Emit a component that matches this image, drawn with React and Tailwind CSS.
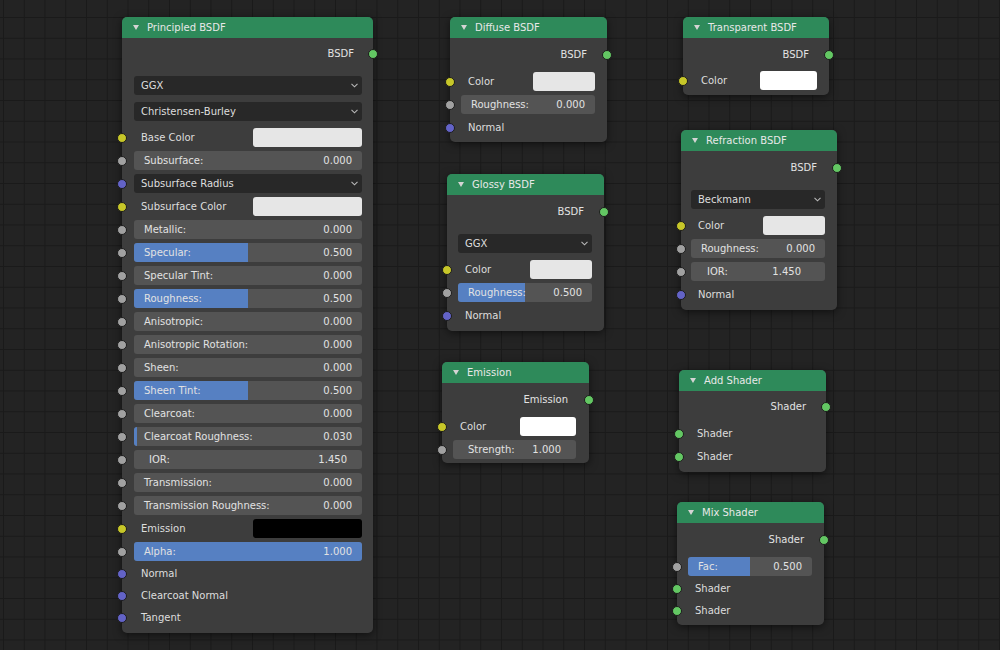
import React from "react";

// socket colours, Blender default theme
const SOCK = {
  yellow: "bg-[#c7c729]",
  gray: "bg-[#a1a1a1]",
  purple: "bg-[#6363c7]",
  green: "bg-[#63c763]",
};

function Socket({ color, side = "left" }) {
  return (
    <span
      className={`absolute top-1/2 -translate-y-1/2 w-[10px] h-[10px] rounded-full border border-[#1c1c1c] ${SOCK[color]} ${
        side === "left" ? "left-[-5px]" : "right-[-5px]"
      }`}
    />
  );
}

function Node({ title, className, children }) {
  return (
    <div
      className={`absolute flex flex-col rounded-[5px] bg-[#3d3d3d] shadow-[0_2px_8px_rgba(0,0,0,0.55)] ${className}`}
    >
      <div className="h-[21px] shrink-0 rounded-t-[5px] bg-[#2e8a5a] flex items-center pl-[11px] gap-[8px] text-[#e8e8e8]">
        <svg width="6" height="5" viewBox="0 0 6 5">
          <path d="M0 0H6L3 5Z" fill="#d4d4d4" />
        </svg>
        <span>{title}</span>
      </div>
      <div className="flex flex-col">{children}</div>
    </div>
  );
}

function Row({ pad, h = "h-[23px]", className = "", socket, out, children }) {
  return (
    <div className={`relative flex items-center ${h} ${pad} ${className}`}>
      {socket && <Socket color={socket} side={out ? "right" : "left"} />}
      {children}
    </div>
  );
}

const OutLabel = ({ children }) => (
  <div className="flex-1 text-right pr-[8px] text-[#e2e2e2]">{children}</div>
);

const Label = ({ children }) => (
  <div className="flex-1 pl-[7px] text-[#dedede]">{children}</div>
);

function Dropdown({ label }) {
  return (
    <div className="flex-1 h-[19px] rounded-[3px] bg-[#282828] flex items-center justify-between pl-[7px] pr-[4px] text-[#dedede]">
      <span>{label}</span>
      <svg width="7" height="5" viewBox="0 0 7 5">
        <path d="M0.5 0.8L3.5 3.8L6.5 0.8" stroke="#b8b8b8" strokeWidth="1.1" fill="none" />
      </svg>
    </div>
  );
}

function Swatch({ label, color, w }) {
  return (
    <>
      <Label>{label}</Label>
      <div className={`h-[19px] rounded-[3px] ${w} ${color}`} />
    </>
  );
}

function Slider({ label, value, fill = 0, textPad = "px-[10px]" }) {
  return (
    <div className="relative flex-1 h-[19px] rounded-[3px] bg-[#545454] overflow-hidden">
      {fill > 0 && (
        <div
          className="absolute inset-y-0 left-0 bg-[#5680c2]"
          style={{ width: `${fill * 100}%` }}
        />
      )}
      <div className={`relative h-full flex items-center justify-between text-[#e2e2e2] ${textPad}`}>
        <span>{label}</span>
        <span>{value}</span>
      </div>
    </div>
  );
}

const principledRows = [
  { kind: "color", label: "Base Color", socket: "yellow", color: "bg-[#e6e6e6]" },
  { kind: "slider", label: "Subsurface:", value: "0.000", socket: "gray" },
  { kind: "dropdown", label: "Subsurface Radius", socket: "purple" },
  { kind: "color", label: "Subsurface Color", socket: "yellow", color: "bg-[#e6e6e6]" },
  { kind: "slider", label: "Metallic:", value: "0.000", socket: "gray" },
  { kind: "slider", label: "Specular:", value: "0.500", fill: 0.5, socket: "gray" },
  { kind: "slider", label: "Specular Tint:", value: "0.000", socket: "gray" },
  { kind: "slider", label: "Roughness:", value: "0.500", fill: 0.5, socket: "gray" },
  { kind: "slider", label: "Anisotropic:", value: "0.000", socket: "gray" },
  { kind: "slider", label: "Anisotropic Rotation:", value: "0.000", socket: "gray" },
  { kind: "slider", label: "Sheen:", value: "0.000", socket: "gray" },
  { kind: "slider", label: "Sheen Tint:", value: "0.500", fill: 0.5, socket: "gray" },
  { kind: "slider", label: "Clearcoat:", value: "0.000", socket: "gray" },
  { kind: "slider", label: "Clearcoat Roughness:", value: "0.030", fill: 0.015, socket: "gray" },
  { kind: "number", label: "IOR:", value: "1.450", socket: "gray" },
  { kind: "slider", label: "Transmission:", value: "0.000", socket: "gray" },
  { kind: "slider", label: "Transmission Roughness:", value: "0.000", socket: "gray" },
  { kind: "color", label: "Emission", socket: "yellow", color: "bg-[#000000]" },
  { kind: "slider", label: "Alpha:", value: "1.000", fill: 1, socket: "gray" },
  { kind: "label", label: "Normal", socket: "purple" },
  { kind: "label", label: "Clearcoat Normal", socket: "purple" },
  { kind: "label", label: "Tangent", socket: "purple" },
];

function PrincipledBSDF() {
  const pad = "pl-[12px] pr-[11px]";
  return (
    <Node title="Principled BSDF" className="left-[122px] top-[17px] w-[251px] h-[616px]">
      <Row pad={pad} socket="green" out className="mt-[4px]">
        <OutLabel>BSDF</OutLabel>
      </Row>
      <Row pad={pad} h="h-[19px]" className="mt-[11px]">
        <Dropdown label="GGX" />
      </Row>
      <Row pad={pad} h="h-[19px]" className="mt-[7px]">
        <Dropdown label="Christensen-Burley" />
      </Row>
      <div className="mt-[5px] flex flex-col">
        {principledRows.map((r) => (
          <Row
            key={r.label}
            pad={pad}
            socket={r.socket}
            h={r.kind === "label" ? "h-[22px]" : "h-[23px]"}
          >
            {r.kind === "color" && <Swatch label={r.label} color={r.color} w="w-[109px]" />}
            {r.kind === "slider" && <Slider label={r.label} value={r.value} fill={r.fill} />}
            {r.kind === "number" && <Slider label={r.label} value={r.value} textPad="px-[15px]" />}
            {r.kind === "dropdown" && <Dropdown label={r.label} />}
            {r.kind === "label" && <Label>{r.label}</Label>}
          </Row>
        ))}
      </div>
    </Node>
  );
}

export default function App() {
  const p1 = "pl-[11px] pr-[12px]";
  return (
    <div className="relative w-[1000px] h-[650px] overflow-hidden bg-[#232323] bg-[linear-gradient(to_right,#1a1a1a_1px,transparent_1px),linear-gradient(to_bottom,#1a1a1a_1px,transparent_1px)] bg-[length:20.75px_20.75px] bg-[position:3px_-3.75px] font-['DejaVu_Sans',sans-serif] text-[10px] leading-none">
      <PrincipledBSDF />

      {/* Diffuse */}
      <Node title="Diffuse BSDF" className="left-[450px] top-[17px] w-[157px] h-[125px]">
        <Row pad={p1} socket="green" out className="mt-[5px]">
          <OutLabel>BSDF</OutLabel>
        </Row>
        <Row pad={p1} socket="yellow" className="mt-[4px]">
          <Swatch label="Color" color="bg-[#e6e6e6]" w="w-[62px]" />
        </Row>
        <Row pad={p1} socket="gray">
          <Slider label="Roughness:" value="0.000" />
        </Row>
        <Row pad={p1} socket="purple">
          <Label>Normal</Label>
        </Row>
      </Node>

      {/* Glossy */}
      <Node title="Glossy BSDF" className="left-[447px] top-[174px] w-[157px] h-[157px]">
        <Row pad={p1} socket="green" out className="mt-[5px]">
          <OutLabel>BSDF</OutLabel>
        </Row>
        <Row pad={p1} h="h-[19px]" className="mt-[11px]">
          <Dropdown label="GGX" />
        </Row>
        <Row pad={p1} socket="yellow" className="mt-[5px]">
          <Swatch label="Color" color="bg-[#e6e6e6]" w="w-[62px]" />
        </Row>
        <Row pad={p1} socket="gray">
          <Slider label="Roughness:" value="0.500" fill={0.5} />
        </Row>
        <Row pad={p1} socket="purple">
          <Label>Normal</Label>
        </Row>
      </Node>

      {/* Emission */}
      <Node title="Emission" className="left-[442px] top-[362px] w-[147px] h-[101px]">
        <Row pad="pl-[11px] pr-[13px]" socket="green" out className="mt-[5px]">
          <OutLabel>Emission</OutLabel>
        </Row>
        <Row pad="pl-[11px] pr-[13px]" socket="yellow" className="mt-[4px]">
          <Swatch label="Color" color="bg-[#ffffff]" w="w-[56px]" />
        </Row>
        <Row pad="pl-[11px] pr-[13px]" socket="gray">
          <Slider label="Strength:" value="1.000" textPad="px-[15px]" />
        </Row>
      </Node>

      {/* Transparent */}
      <Node title="Transparent BSDF" className="left-[683px] top-[17px] w-[146px] h-[78px]">
        <Row pad={p1} socket="green" out className="mt-[5px]">
          <OutLabel>BSDF</OutLabel>
        </Row>
        <Row pad={p1} socket="yellow" className="mt-[3px]">
          <Swatch label="Color" color="bg-[#ffffff]" w="w-[57px]" />
        </Row>
      </Node>

      {/* Refraction */}
      <Node title="Refraction BSDF" className="left-[681px] top-[130px] w-[156px] h-[180px]">
        <Row pad="pl-[10px] pr-[12px]" socket="green" out className="mt-[5px]">
          <OutLabel>BSDF</OutLabel>
        </Row>
        <Row pad="pl-[10px] pr-[12px]" h="h-[19px]" className="mt-[11px]">
          <Dropdown label="Beckmann" />
        </Row>
        <Row pad="pl-[10px] pr-[12px]" socket="yellow" className="mt-[5px]">
          <Swatch label="Color" color="bg-[#e6e6e6]" w="w-[62px]" />
        </Row>
        <Row pad="pl-[10px] pr-[12px]" socket="gray">
          <Slider label="Roughness:" value="0.000" />
        </Row>
        <Row pad="pl-[10px] pr-[12px]" socket="gray">
          <Slider label="IOR:" value="1.450" textPad="pl-[16px] pr-[24px]" />
        </Row>
        <Row pad="pl-[10px] pr-[12px]" socket="purple">
          <Label>Normal</Label>
        </Row>
      </Node>

      {/* Add Shader */}
      <Node title="Add Shader" className="left-[679px] top-[370px] w-[147px] h-[102px]">
        <Row pad={p1} socket="green" out className="mt-[4px]">
          <OutLabel>Shader</OutLabel>
        </Row>
        <Row pad={p1} socket="green" className="mt-[4px]">
          <Label>Shader</Label>
        </Row>
        <Row pad={p1} socket="green">
          <Label>Shader</Label>
        </Row>
      </Node>

      {/* Mix Shader */}
      <Node title="Mix Shader" className="left-[677px] top-[502px] w-[147px] h-[123px]">
        <Row pad={p1} socket="green" out className="mt-[5px]">
          <OutLabel>Shader</OutLabel>
        </Row>
        <Row pad={p1} socket="gray" className="mt-[4px]">
          <Slider label="Fac:" value="0.500" fill={0.5} />
        </Row>
        <Row pad={p1} socket="green" h="h-[22px]">
          <Label>Shader</Label>
        </Row>
        <Row pad={p1} socket="green" h="h-[22px]">
          <Label>Shader</Label>
        </Row>
      </Node>
    </div>
  );
}
